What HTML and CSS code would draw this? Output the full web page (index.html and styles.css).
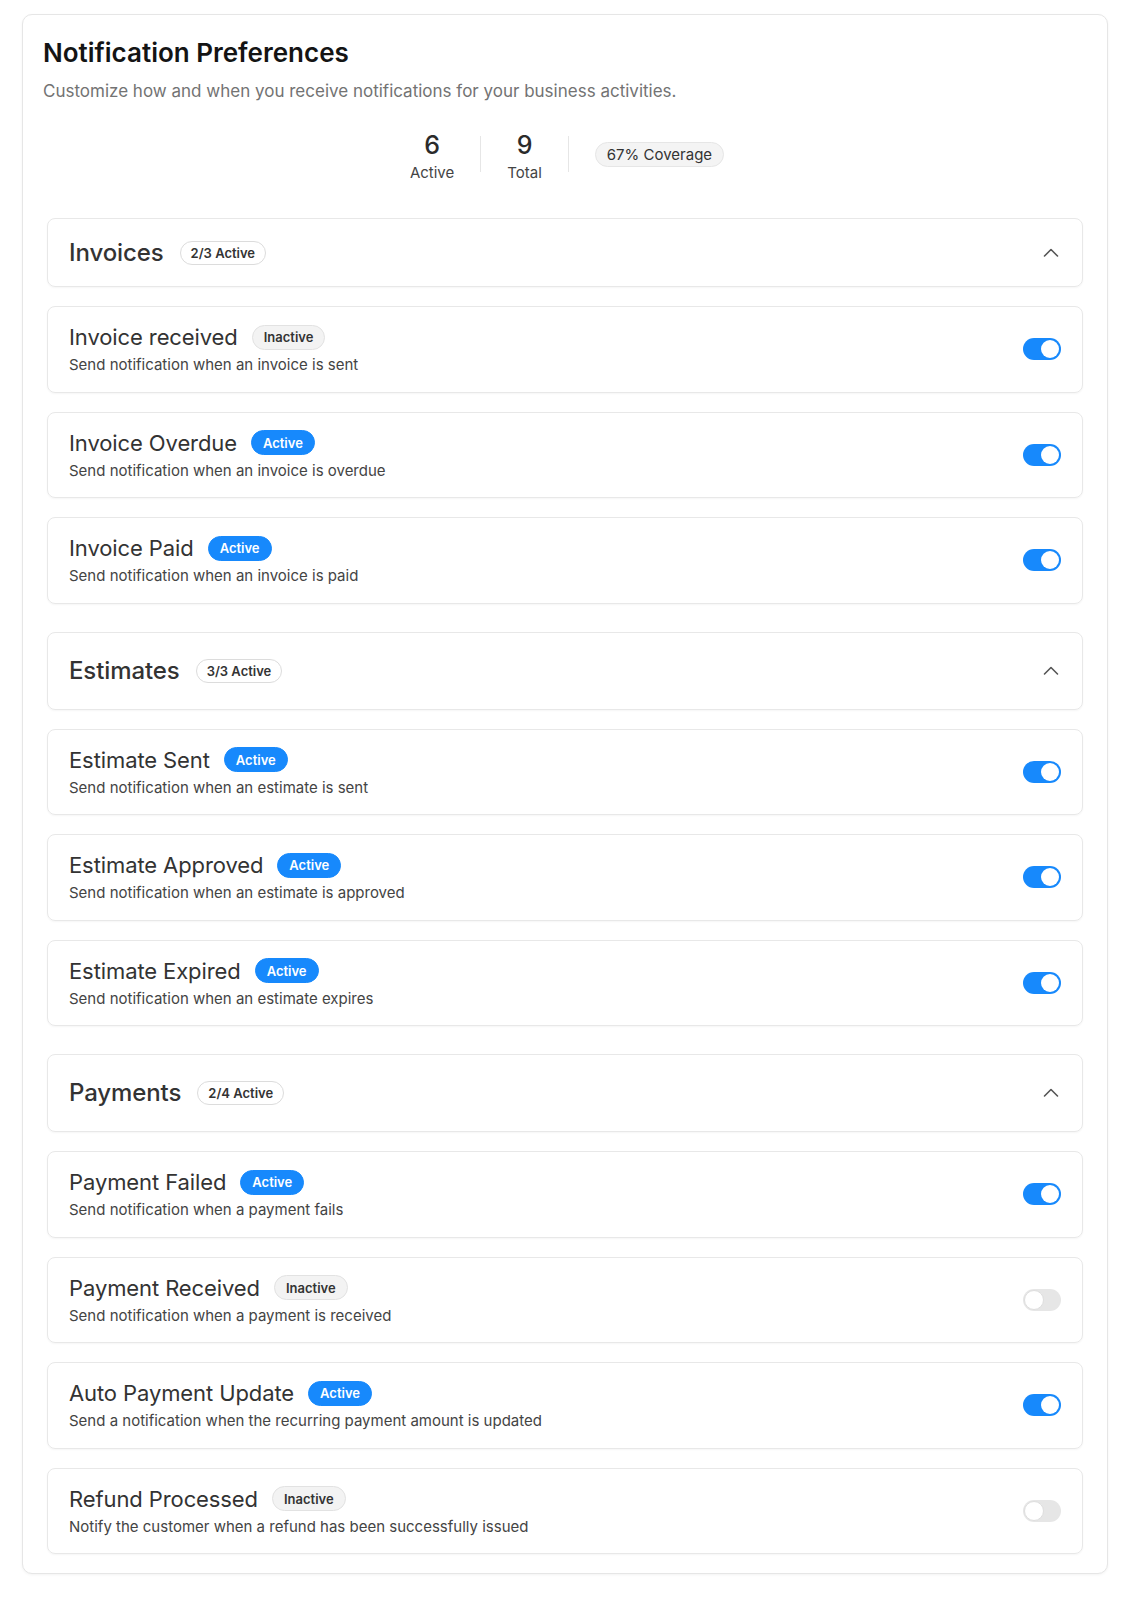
FILE: index.html
```html
<!DOCTYPE html>
<html lang="en">
<head>
<meta charset="utf-8">
<title>Notification Preferences</title>
<link rel="stylesheet" href="styles.css">
</head>
<body>
<div class="card">
  <h1 class="title">Notification Preferences</h1>
  <p class="subtitle">Customize how and when you receive notifications for your business activities.</p>

  <div class="stats">
    <div class="stat"><div class="stat-num">6</div><div class="stat-label">Active</div></div>
    <div class="divider"></div>
    <div class="stat"><div class="stat-num">9</div><div class="stat-label">Total</div></div>
    <div class="divider"></div>
    <div class="coverage">67% Coverage</div>
  </div>

  <div class="sections">
    <section class="section">
      <div class="section-head section-head--first">
        <div class="head-left"><span class="section-title">Invoices</span><span class="count-pill">2/3 Active</span></div>
        <svg class="chevron" width="20" height="20" viewBox="0 0 20 20"><path d="M3.5 13 L10 6.5 L16.5 13" fill="none" stroke="#555" stroke-width="1.6" stroke-linecap="round" stroke-linejoin="round"/></svg>
      </div>
      <div class="item">
        <div class="item-text">
          <div class="item-title-row"><span class="item-title">Invoice received</span><span class="badge badge--off">Inactive</span></div>
          <div class="item-desc">Send notification when an invoice is sent</div>
        </div>
        <span class="toggle toggle--on"><span class="knob"></span></span>
      </div>
      <div class="item">
        <div class="item-text">
          <div class="item-title-row"><span class="item-title">Invoice Overdue</span><span class="badge badge--on">Active</span></div>
          <div class="item-desc">Send notification when an invoice is overdue</div>
        </div>
        <span class="toggle toggle--on"><span class="knob"></span></span>
      </div>
      <div class="item">
        <div class="item-text">
          <div class="item-title-row"><span class="item-title">Invoice Paid</span><span class="badge badge--on">Active</span></div>
          <div class="item-desc">Send notification when an invoice is paid</div>
        </div>
        <span class="toggle toggle--on"><span class="knob"></span></span>
      </div>
    </section>

    <section class="section">
      <div class="section-head">
        <div class="head-left"><span class="section-title">Estimates</span><span class="count-pill">3/3 Active</span></div>
        <svg class="chevron" width="20" height="20" viewBox="0 0 20 20"><path d="M3.5 13 L10 6.5 L16.5 13" fill="none" stroke="#555" stroke-width="1.6" stroke-linecap="round" stroke-linejoin="round"/></svg>
      </div>
      <div class="item">
        <div class="item-text">
          <div class="item-title-row"><span class="item-title">Estimate Sent</span><span class="badge badge--on">Active</span></div>
          <div class="item-desc">Send notification when an estimate is sent</div>
        </div>
        <span class="toggle toggle--on"><span class="knob"></span></span>
      </div>
      <div class="item">
        <div class="item-text">
          <div class="item-title-row"><span class="item-title">Estimate Approved</span><span class="badge badge--on">Active</span></div>
          <div class="item-desc">Send notification when an estimate is approved</div>
        </div>
        <span class="toggle toggle--on"><span class="knob"></span></span>
      </div>
      <div class="item">
        <div class="item-text">
          <div class="item-title-row"><span class="item-title">Estimate Expired</span><span class="badge badge--on">Active</span></div>
          <div class="item-desc">Send notification when an estimate expires</div>
        </div>
        <span class="toggle toggle--on"><span class="knob"></span></span>
      </div>
    </section>

    <section class="section">
      <div class="section-head">
        <div class="head-left"><span class="section-title">Payments</span><span class="count-pill">2/4 Active</span></div>
        <svg class="chevron" width="20" height="20" viewBox="0 0 20 20"><path d="M3.5 13 L10 6.5 L16.5 13" fill="none" stroke="#555" stroke-width="1.6" stroke-linecap="round" stroke-linejoin="round"/></svg>
      </div>
      <div class="item">
        <div class="item-text">
          <div class="item-title-row"><span class="item-title">Payment Failed</span><span class="badge badge--on">Active</span></div>
          <div class="item-desc">Send notification when a payment fails</div>
        </div>
        <span class="toggle toggle--on"><span class="knob"></span></span>
      </div>
      <div class="item">
        <div class="item-text">
          <div class="item-title-row"><span class="item-title">Payment Received</span><span class="badge badge--off">Inactive</span></div>
          <div class="item-desc">Send notification when a payment is received</div>
        </div>
        <span class="toggle toggle--off"><span class="knob"></span></span>
      </div>
      <div class="item">
        <div class="item-text">
          <div class="item-title-row"><span class="item-title">Auto Payment Update</span><span class="badge badge--on">Active</span></div>
          <div class="item-desc">Send a notification when the recurring payment amount is updated</div>
        </div>
        <span class="toggle toggle--on"><span class="knob"></span></span>
      </div>
      <div class="item">
        <div class="item-text">
          <div class="item-title-row"><span class="item-title">Refund Processed</span><span class="badge badge--off">Inactive</span></div>
          <div class="item-desc">Notify the customer when a refund has been successfully issued</div>
        </div>
        <span class="toggle toggle--off"><span class="knob"></span></span>
      </div>
    </section>
  </div>
</div>
</body>
</html>
```

FILE: styles.css
```css
* { box-sizing: border-box; }

html, body { background: #ffffff; }

body {
  margin: 0;
  padding: 14px 26px 20px 22px;
  font-family: "Inter", "Noto Sans", sans-serif;
  color: #333;
}

.card {
  border: 1px solid #e6e6e6;
  border-radius: 10px;
  padding: 22px 20px 19px 20px;
  box-shadow: 0 1px 3px rgba(0, 0, 0, 0.05);
  background: #fff;
}

.title {
  margin: 0;
  font-size: 26px;
  line-height: 32px;
  font-weight: 600;
  letter-spacing: 0;
  color: #141414;
}

.subtitle {
  margin: 10px 0 0 0;
  font-size: 17px;
  line-height: 24px;
  color: #737373;
}

.stats {
  margin-top: 27px;
  display: flex;
  justify-content: center;
  align-items: center;
  gap: 26px;
  padding-left: 4px;
}

.stat {
  display: flex;
  flex-direction: column;
  align-items: center;
}

.stat-num {
  font-size: 25px;
  line-height: 30px;
  font-weight: 500;
  color: #2b2b2b;
}

.stat-label {
  margin-top: 3px;
  font-size: 15px;
  line-height: 20px;
  color: #444;
}

.divider {
  width: 1px;
  height: 36px;
  background: #e6e6e6;
  margin-top: -6px;
}

.coverage {
  height: 25px;
  padding: 0 11px;
  display: flex;
  align-items: center;
  border: 1px solid #e6e6e6;
  background: #f4f4f4;
  border-radius: 999px;
  font-size: 15px;
  color: #333;
  margin-top: -4px;
}

.sections {
  margin-top: 35px;
  padding: 0 4px;
  display: flex;
  flex-direction: column;
  gap: 28px;
}

.section {
  display: flex;
  flex-direction: column;
  gap: 19px;
}

.section-head {
  height: 78px;
  border: 1px solid #e8e8e8;
  border-radius: 8px;
  box-shadow: 0 1px 2px rgba(0, 0, 0, 0.04);
  padding: 0 21px;
  display: flex;
  align-items: center;
  justify-content: space-between;
}

.section-head--first { height: 69px; }

.head-left {
  display: flex;
  align-items: center;
  gap: 16px;
}

.section-title {
  font-size: 24px;
  line-height: 30px;
  font-weight: 500;
  color: #333;
  letter-spacing: -0.1px;
}

.count-pill {
  height: 24px;
  padding: 0 10px;
  display: flex;
  align-items: center;
  border: 1px solid #dcdcdc;
  border-radius: 999px;
  font-size: 13px;
  font-weight: 600;
  color: #333;
  background: #fff;
}

.chevron { display: block; }

.item {
  height: 86.5px;
  border: 1px solid #e8e8e8;
  border-radius: 8px;
  box-shadow: 0 1px 2px rgba(0, 0, 0, 0.04);
  padding: 16px 21px 0 21px;
  display: flex;
  justify-content: space-between;
  align-items: center;
}

.item-text {
  align-self: flex-start;
  display: flex;
  flex-direction: column;
  gap: 4px;
}

.item-title-row {
  display: flex;
  align-items: center;
  gap: 14px;
  height: 28px;
}

.item-title {
  font-size: 22px;
  line-height: 28px;
  font-weight: 400;
  color: #333;
  letter-spacing: -0.1px;
}

.item-desc {
  font-size: 15px;
  line-height: 20px;
  color: #444;
}

.badge {
  height: 25px;
  padding: 0 11px;
  display: flex;
  align-items: center;
  border-radius: 999px;
  font-size: 13px;
  font-weight: 600;
}

.badge--off {
  background: #f3f3f3;
  border: 1px solid #e2e2e2;
  color: #333;
}

.badge--on {
  background: #1789fc;
  border: 1px solid #1789fc;
  color: #fff;
}

.toggle {
  position: relative;
  width: 38px;
  height: 22px;
  border-radius: 999px;
  display: block;
  margin-top: -16px;
  flex-shrink: 0;
}

.toggle--on { background: #1789fc; }
.toggle--off { background: #e6e6e6; }

.knob {
  position: absolute;
  top: 2px;
  width: 18px;
  height: 18px;
  border-radius: 50%;
  background: #fff;
}

.toggle--on .knob { right: 2px; }
.toggle--off .knob { left: 1px; top: 1px; width: 20px; height: 20px; border: 1px solid #dedede; }
```
